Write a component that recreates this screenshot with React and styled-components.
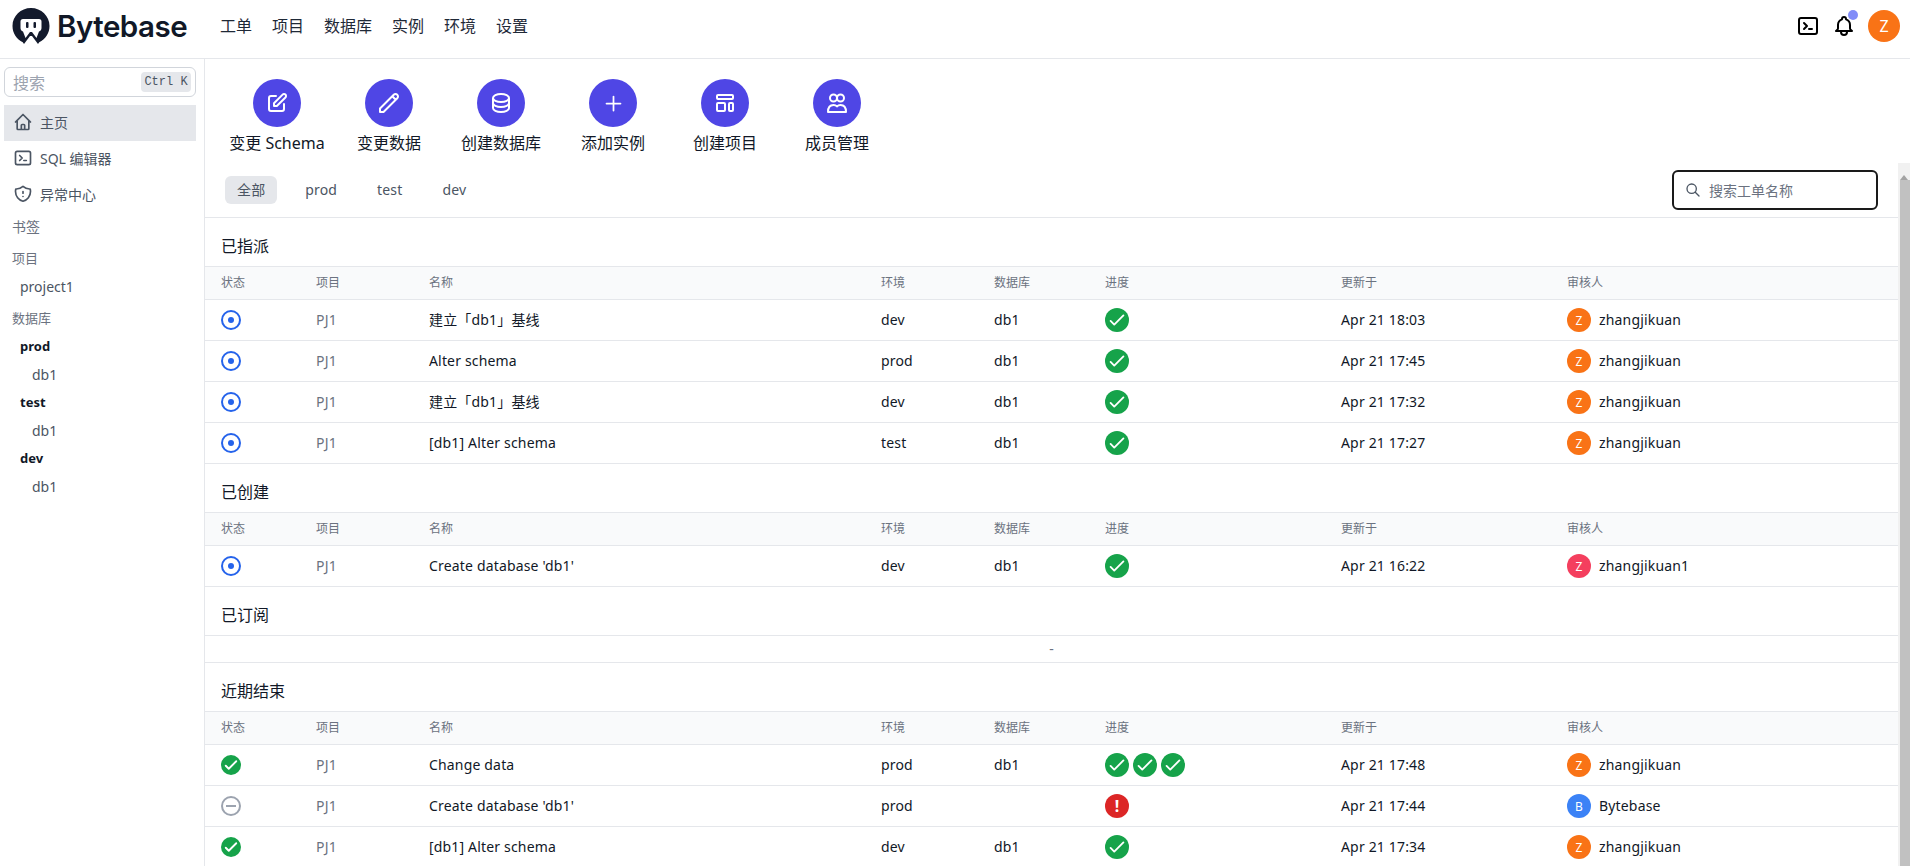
import React from "react";
import styled, { createGlobalStyle } from "styled-components";
import {
  HiOutlinePencilAlt,
  HiOutlinePencil,
  HiOutlineDatabase,
  HiOutlinePlus,
  HiOutlineTemplate,
  HiOutlineHome,
  HiOutlineTerminal,
  HiOutlineShieldExclamation,
  HiOutlineBell,
  HiOutlineSearch,
  HiOutlineCheck,
} from "react-icons/hi";

const GlobalStyle = createGlobalStyle`
  * { box-sizing: border-box; }
  html, body { margin: 0; height: 100%; overflow: hidden; background: #fff; }
  body {
    font-family: "Noto Sans", "Noto Sans CJK SC", sans-serif;
    font-size: 14px;
    color: #111827;
  }
`;

const Page = styled.div`
  display: flex;
  flex-direction: column;
  height: 100vh;
`;

/* top bar */
const TopBar = styled.header`
  display: flex;
  align-items: center;
  height: 59px;
  flex: none;
  padding: 0 10px 6px 12px;
  border-bottom: 1px solid #e5e7eb;
`;
const Logo = styled.div`
  display: flex;
  align-items: center;
  gap: 7px;
  width: 208px;
  color: #111827;
  font-family: Inter, sans-serif;
  font-weight: 600;
  font-size: 29.5px;
  letter-spacing: -0.5px;
`;
const Nav = styled.nav`
  display: flex;
  gap: 20px;
  flex: 1;
`;
const NavLink = styled.a`
  font-size: 16px;
  line-height: 24px;
  color: #1f2937;
`;
const TopActions = styled.div`
  display: flex;
  align-items: center;
  gap: 12px;
`;
const BellWrap = styled.div`
  position: relative;
  display: flex;
  color: #000;
`;
const BellDot = styled.span`
  position: absolute;
  top: -4px;
  right: -2px;
  width: 10px;
  height: 10px;
  border-radius: 50%;
  background: #818cf8;
`;
const TermIcon = styled(HiOutlineTerminal)`
  color: #000;
  font-size: 24px;
`;
const Avatar = styled.span`
  display: inline-flex;
  align-items: center;
  justify-content: center;
  flex: none;
  width: ${(p) => p.$size || 24}px;
  height: ${(p) => p.$size || 24}px;
  border-radius: 50%;
  background: ${(p) => p.$bg || "#f97316"};
  color: #fff;
  font-size: ${(p) => (p.$size === 32 ? 16 : 12)}px;
`;

/* body */
const Body = styled.div`
  display: flex;
  flex: 1;
  min-height: 0;
`;
const Sidebar = styled.aside`
  width: 205px;
  flex: none;
  padding: 8px 8px 0 4px;
  border-right: 1px solid #e5e7eb;
`;
const SideSearch = styled.div`
  display: flex;
  align-items: center;
  justify-content: space-between;
  height: 30px;
  width: 192px;
  padding: 0 4px 0 8px;
  border: 1px solid #d1d5db;
  border-radius: 6px;
  margin-bottom: 8px;
  font-size: 16px;
  color: #9ca3af;
`;
const Kbd = styled.span`
  display: flex;
  align-items: center;
  justify-content: center;
  width: 50px;
  height: 20px;
  border-radius: 4px;
  background: #e5e7eb;
  color: #4b5563;
  font-family: "Liberation Mono", monospace;
  font-size: 12px;
`;
const SideItem = styled.div`
  display: flex;
  align-items: center;
  gap: 7px;
  width: 192px;
  height: 36px;
  padding: 0 0 3px 9px;
  color: #4b5563;
  background: ${(p) => (p.$active ? "#e5e7eb" : "transparent")};
  svg { font-size: 20px; flex: none; }
`;
const SideHeading = styled.div`
  height: 28px;
  line-height: 27px;
  margin-top: ${(p) => p.$gap || 0}px;
  padding-left: 8px;
  color: #6b7280;
  font-size: ${(p) => p.$size || 13}px;
`;
const SideLink = styled.div`
  height: 28px;
  line-height: ${(p) => (p.$strong ? 26 : 27)}px;
  padding-left: ${(p) => p.$indent || 16}px;
  color: ${(p) => (p.$strong ? "#111827" : "#4b5563")};
  font-weight: ${(p) => (p.$strong ? 700 : 400)};
  font-size: ${(p) => (p.$strong ? 13 : 14)}px;
`;

/* main */
const Main = styled.main`
  flex: 1;
  min-width: 0;
  display: flex;
  flex-direction: column;
`;
const Actions = styled.div`
  display: flex;
  flex: none;
  height: 104px;
  padding: 20px 0 0 16px;
`;
const Action = styled.div`
  display: flex;
  flex-direction: column;
  align-items: center;
  width: 112px;
  gap: 4px;
  font-size: 16px;
  line-height: 24px;
  color: #111827;
  white-space: nowrap;
`;
const ActionCircle = styled.span`
  display: flex;
  align-items: center;
  justify-content: center;
  width: 48px;
  height: 48px;
  border-radius: 50%;
  background: #4f46e5;
  color: #fff;
  font-size: ${(p) => p.$iconSize || 24}px;
`;
const ScrollArea = styled.div`
  display: flex;
  flex: 1;
  min-height: 0;
`;
const ScrollContent = styled.div`
  flex: 1;
  min-width: 0;
  overflow: hidden;
`;
const Rail = styled.div`
  display: flex;
  flex-direction: column;
  align-items: flex-end;
  width: 12px;
  flex: none;
  background: #f1f1f1;
`;
const RailArrow = styled.div`
  height: 17px;
  width: 12px;
  display: flex;
  justify-content: center;
  padding-top: 6px;
  &::before {
    content: "";
    border-left: 4px solid transparent;
    border-right: 4px solid transparent;
    border-bottom: 5px solid #a3a3a3;
  }
`;
const RailThumb = styled.div`
  flex: 1;
  width: 10px;
  background: #c1c1c1;
`;
const FilterRow = styled.div`
  display: flex;
  align-items: center;
  justify-content: space-between;
  height: 55px;
  padding: 0 20px;
  border-bottom: 1px solid #e5e7eb;
`;
const Tabs = styled.div`
  display: flex;
  gap: 16px;
  letter-spacing: 0.15px;
`;
const Tab = styled.span`
  height: 28px;
  line-height: 27px;
  padding: 0 12px;
  border-radius: 6px;
  color: #4b5563;
  background: ${(p) => (p.$active ? "#e5e7eb" : "transparent")};
`;
const IssueSearch = styled.label`
  display: flex;
  align-items: center;
  gap: 8px;
  width: 206px;
  height: 40px;
  padding: 0 12px 0 11px;
  border: 2px solid #1a1a1a;
  border-radius: 6px;
  color: #4b5563;
  svg { font-size: 16px; flex: none; }
`;
const IssueInput = styled.input`
  border: 0;
  outline: 0;
  min-width: 0;
  width: 100%;
  padding: 0;
  font: inherit;
  &::placeholder { color: #6b7280; opacity: 1; }
`;
const SectionTitle = styled.h3`
  margin: 0;
  height: 48px;
  padding: 16px 16px 0;
  font-size: 16px;
  line-height: 24px;
  font-weight: 400;
  color: #111827;
`;
const columns = "95px 113px 452px 113px 111px 236px 226px 1fr";
const HeadRow = styled.div`
  display: grid;
  grid-template-columns: ${columns};
  align-items: center;
  height: 34px;
  padding: 0 0 2px 16px;
  border-top: 1px solid #e5e7eb;
  border-bottom: 1px solid #e5e7eb;
  background: #f9fafb;
  font-size: 12px;
  color: #6b7280;
`;
const Row = styled.div`
  display: grid;
  grid-template-columns: ${columns};
  align-items: center;
  height: 41px;
  padding-left: 16px;
  border-bottom: 1px solid #e5e7eb;
  letter-spacing: 0.17px;
`;
const Cell = styled.span`
  padding-bottom: 2px;
`;
const Muted = styled(Cell)`
  color: #6b7280;
`;
const EmptyRow = styled.div`
  height: 28px;
  line-height: 26px;
  text-align: center;
  font-size: 14px;
  color: #6b7280;
  border-top: 1px solid #e5e7eb;
  border-bottom: 1px solid #e5e7eb;
`;
const Ring = styled.span`
  display: flex;
  align-items: center;
  justify-content: center;
  width: 20px;
  height: 20px;
  border-radius: 50%;
  border: 2px solid ${(p) => p.$color};
`;
const Dot = styled.span`
  width: 6px;
  height: 6px;
  border-radius: 50%;
  background: #2563eb;
`;
const Dash = styled.span`
  width: 10px;
  height: 2px;
  background: #9ca3af;
`;
const Solid = styled.span`
  display: flex;
  align-items: center;
  justify-content: center;
  width: ${(p) => p.$size}px;
  height: ${(p) => p.$size}px;
  border-radius: 50%;
  background: ${(p) => p.$bg || "#16a34a"};
  color: #fff;
  font-size: ${(p) => p.$size - 2}px;
  svg { stroke-width: ${(p) => (p.$size === 24 ? 2 : 2.5)}; }
`;
const Bang = styled.span`
  font-size: 16px;
  font-weight: 700;
  line-height: 1;
`;
const Progress = styled.div`
  display: flex;
  gap: 4px;
`;
const Assignee = styled.div`
  display: flex;
  align-items: center;
  gap: 8px;
`;

const MembersIcon = () => (
  <svg width="24" height="24" viewBox="0 0 24 24" fill="none" stroke="currentColor" strokeWidth="2" strokeLinecap="round" strokeLinejoin="round">
    <circle cx="8.5" cy="7" r="3.500" />
    <circle cx="15.500" cy="7" r="3.500" />
    <path d="M3 21c0-4.500 2-7 5.500-7 1.500 0 2.700.5 3.500 1.500.8-1 2-1.500 3.500-1.500 3.500 0 5.500 2.500 5.500 7z" />
  </svg>
);

const LogoMark = () => (
  <svg width="38" height="36" viewBox="0 0 38 36" fill="none">
    <path
      d="M19 0C8.800 0 .5 8 .5 18c0 7.200 4.200 13.300 10.300 16.300L12 36l6-8h2l6 8 1.200-1.700C33.300 31.300 37.500 25.200 37.500 18 37.500 8 29.200 0 19 0z"
      fill="#131a2c"
    />
    <path
      d="M11 11h16a2.500 2.500 0 0 1 2.500 2.500V20c0 2-1 3-2.500 3.500L24.500 30 20 24h-2l-4.500 6-2.500-6.500C9.500 23 8.500 22 8.500 20v-6.500A2.500 2.500 0 0 1 11 11z"
      fill="#fff"
    />
    <rect x="14" y="14" width="2.500" height="6" rx="1" fill="#131a2c" />
    <rect x="21.500" y="14" width="2.500" height="6" rx="1" fill="#131a2c" />
  </svg>
);

const ACTIONS = [
  { icon: <HiOutlinePencilAlt />, label: "变更 Schema" },
  { icon: <HiOutlinePencil />, label: "变更数据" },
  { icon: <HiOutlineDatabase />, label: "创建数据库" },
  { icon: <HiOutlinePlus />, label: "添加实例", size: 21 },
  { icon: <HiOutlineTemplate />, label: "创建项目" },
  { icon: <MembersIcon />, label: "成员管理" },
];

const HEADS = ["状态", "项目", "名称", "环境", "数据库", "进度", "更新于", "审核人"];

const ME = { name: "zhangjikuan", letter: "Z", bg: "#f97316" };

const StatusIcon = ({ status }) => {
  if (status === "open") return <Ring $color="#2563eb"><Dot /></Ring>;
  if (status === "canceled") return <Ring $color="#9ca3af"><Dash /></Ring>;
  return <Solid $size={20}><HiOutlineCheck /></Solid>;
};

const ProgressIcons = ({ steps }) => (
  <Progress>
    {steps.split("").map((s, i) =>
      s === "x" ? (
        <Solid key={i} $size={24} $bg="#dc2626"><Bang>!</Bang></Solid>
      ) : (
        <Solid key={i} $size={24}><HiOutlineCheck /></Solid>
      )
    )}
  </Progress>
);

const IssueRow = ({ issue }) => (
  <Row>
    <StatusIcon status={issue.status} />
    <Muted>PJ1</Muted>
    <Cell>{issue.name}</Cell>
    <Cell>{issue.env}</Cell>
    <Cell>{issue.db}</Cell>
    <ProgressIcons steps={issue.steps} />
    <Cell>{issue.time}</Cell>
    <Assignee>
      <Avatar $bg={issue.user.bg}>{issue.user.letter}</Avatar>
      <Cell>{issue.user.name}</Cell>
    </Assignee>
  </Row>
);

const IssueTable = ({ title, issues }) => (
  <section>
    <SectionTitle>{title}</SectionTitle>
    <HeadRow>
      {HEADS.map((h) => <span key={h}>{h}</span>)}
    </HeadRow>
    {issues.map((issue, i) => <IssueRow key={i} issue={issue} />)}
  </section>
);

const ASSIGNED = [
  { status: "open", name: "建立「db1」基线", env: "dev", db: "db1", steps: "o", time: "Apr 21 18:03", user: ME },
  { status: "open", name: "Alter schema", env: "prod", db: "db1", steps: "o", time: "Apr 21 17:45", user: ME },
  { status: "open", name: "建立「db1」基线", env: "dev", db: "db1", steps: "o", time: "Apr 21 17:32", user: ME },
  { status: "open", name: "[db1] Alter schema", env: "test", db: "db1", steps: "o", time: "Apr 21 17:27", user: ME },
];
const CREATED = [
  { status: "open", name: "Create database 'db1'", env: "dev", db: "db1", steps: "o", time: "Apr 21 16:22", user: { name: "zhangjikuan1", letter: "Z", bg: "#f43f5e" } },
];
const CLOSED = [
  { status: "done", name: "Change data", env: "prod", db: "db1", steps: "ooo", time: "Apr 21 17:48", user: ME },
  { status: "canceled", name: "Create database 'db1'", env: "prod", db: "", steps: "x", time: "Apr 21 17:44", user: { name: "Bytebase", letter: "B", bg: "#3b82f6" } },
  { status: "done", name: "[db1] Alter schema", env: "dev", db: "db1", steps: "o", time: "Apr 21 17:34", user: ME },
];

export default function App() {
  return (
    <Page>
      <GlobalStyle />
      <TopBar>
        <Logo><LogoMark />Bytebase</Logo>
        <Nav>
          {["工单", "项目", "数据库", "实例", "环境", "设置"].map((n) => <NavLink key={n}>{n}</NavLink>)}
        </Nav>
        <TopActions>
          <TermIcon />
          <BellWrap>
            <HiOutlineBell size={24} />
            <BellDot />
          </BellWrap>
          <Avatar $size={32}>Z</Avatar>
        </TopActions>
      </TopBar>
      <Body>
        <Sidebar>
          <SideSearch>搜索<Kbd>Ctrl K</Kbd></SideSearch>
          <SideItem $active><HiOutlineHome />主页</SideItem>
          <SideItem><HiOutlineTerminal />SQL 编辑器</SideItem>
          <SideItem><HiOutlineShieldExclamation />异常中心</SideItem>
          <SideHeading $size={14}>书签</SideHeading>
          <SideHeading $gap={4}>项目</SideHeading>
          <SideLink>project1</SideLink>
          <SideHeading $gap={4}>数据库</SideHeading>
          <SideLink $strong>prod</SideLink>
          <SideLink $indent={28}>db1</SideLink>
          <SideLink $strong>test</SideLink>
          <SideLink $indent={28}>db1</SideLink>
          <SideLink $strong>dev</SideLink>
          <SideLink $indent={28}>db1</SideLink>
        </Sidebar>
        <Main>
          <Actions>
            {ACTIONS.map(({ icon, label, size }) => (
              <Action key={label}>
                <ActionCircle $iconSize={size}>{icon}</ActionCircle>
                {label}
              </Action>
            ))}
          </Actions>
          <ScrollArea>
            <ScrollContent>
              <FilterRow>
                <Tabs>
                  <Tab $active>全部</Tab>
                  <Tab>prod</Tab>
                  <Tab>test</Tab>
                  <Tab>dev</Tab>
                </Tabs>
                <IssueSearch>
                  <HiOutlineSearch />
                  <IssueInput placeholder="搜索工单名称" />
                </IssueSearch>
              </FilterRow>
              <IssueTable title="已指派" issues={ASSIGNED} />
              <IssueTable title="已创建" issues={CREATED} />
              <SectionTitle>已订阅</SectionTitle>
              <EmptyRow>-</EmptyRow>
              <IssueTable title="近期结束" issues={CLOSED} />
            </ScrollContent>
            <Rail>
              <RailArrow />
              <RailThumb />
            </Rail>
          </ScrollArea>
        </Main>
      </Body>
    </Page>
  );
}
